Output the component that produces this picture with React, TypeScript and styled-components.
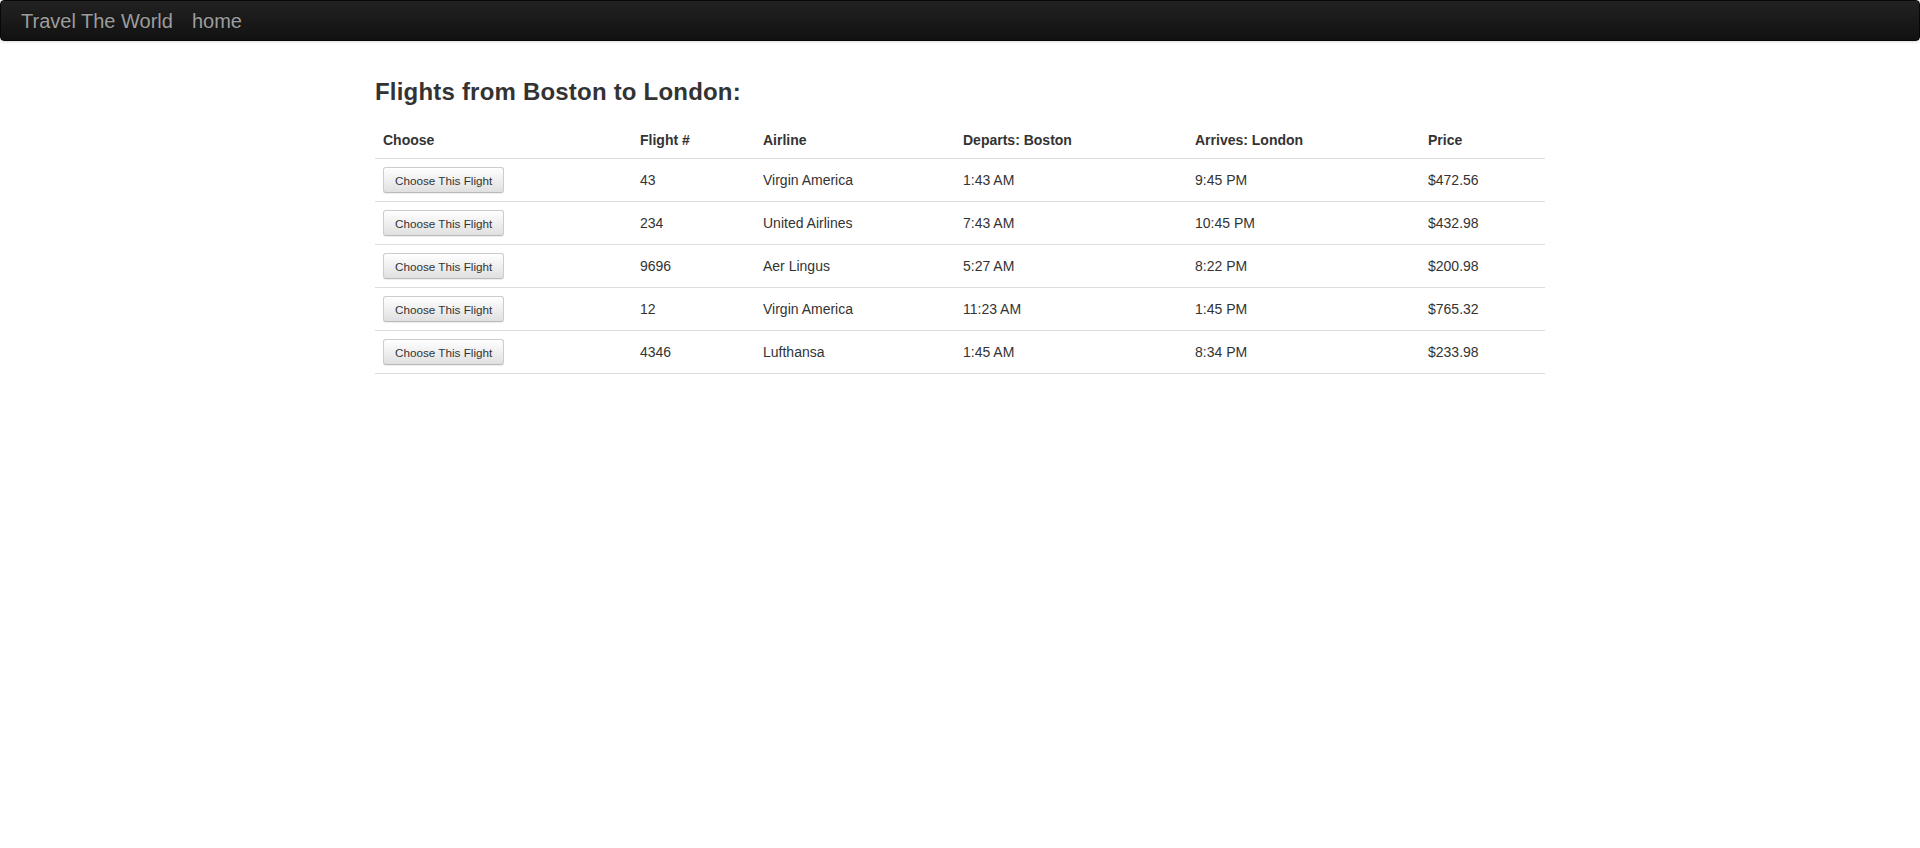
import styled, { createGlobalStyle } from "styled-components";

interface Flight {
  number: string;
  airline: string;
  departs: string;
  arrives: string;
  price: string;
}

const flights: Flight[] = [
  { number: "43", airline: "Virgin America", departs: "1:43 AM", arrives: "9:45 PM", price: "$472.56" },
  { number: "234", airline: "United Airlines", departs: "7:43 AM", arrives: "10:45 PM", price: "$432.98" },
  { number: "9696", airline: "Aer Lingus", departs: "5:27 AM", arrives: "8:22 PM", price: "$200.98" },
  { number: "12", airline: "Virgin America", departs: "11:23 AM", arrives: "1:45 PM", price: "$765.32" },
  { number: "4346", airline: "Lufthansa", departs: "1:45 AM", arrives: "8:34 PM", price: "$233.98" },
];

const columns = [
  { label: "Choose", width: 257 },
  { label: "Flight #", width: 123 },
  { label: "Airline", width: 200 },
  { label: "Departs: Boston", width: 232 },
  { label: "Arrives: London", width: 233 },
  { label: "Price", width: 125 },
];

export default function App() {
  return (
    <>
      <GlobalStyle />
      <Navbar>
        <Brand href="#">Travel The World</Brand>
        <NavLink href="#">home</NavLink>
      </Navbar>
      <Container>
        <Heading>Flights from Boston to London:</Heading>
        <FlightTable>
          <colgroup>
            {columns.map((c) => (
              <col key={c.label} style={{ width: c.width }} />
            ))}
          </colgroup>
          <thead>
            <tr>
              {columns.map((c) => (
                <HeadCell key={c.label}>{c.label}</HeadCell>
              ))}
            </tr>
          </thead>
          <tbody>
            {flights.map((f) => (
              <tr key={f.number}>
                <Cell>
                  <ChooseButton type="button">Choose This Flight</ChooseButton>
                </Cell>
                <Cell>{f.number}</Cell>
                <Cell>{f.airline}</Cell>
                <Cell>{f.departs}</Cell>
                <Cell>{f.arrives}</Cell>
                <Cell>{f.price}</Cell>
              </tr>
            ))}
          </tbody>
        </FlightTable>
      </Container>
    </>
  );
}

const GlobalStyle = createGlobalStyle`
  html, body {
    margin: 0;
    padding: 0;
    background: #fff;
  }

  body {
    font-family: "Liberation Sans", Helvetica, Arial, sans-serif;
    font-size: 14px;
    line-height: 20px;
    color: #333;
  }
`;

const Navbar = styled.nav`
  display: flex;
  align-items: center;
  gap: 19px;
  height: 41px;
  padding: 0 20px;
  box-sizing: border-box;
  background: linear-gradient(to bottom, #222 0%, #111 100%);
  border: 1px solid #080808;
  border-radius: 4px;
  box-shadow: 0 1px 3px rgba(0, 0, 0, 0.15);
`;

const Brand = styled.a`
  color: #9d9d9d;
  font-size: 20px;
  line-height: 24px;
  text-decoration: none;
  text-shadow: 0 -1px 0 rgba(0, 0, 0, 0.25);
`;

const NavLink = styled(Brand)``;

const Container = styled.main`
  width: 1170px;
  margin: 0 auto;
`;

const Heading = styled.h3`
  margin: 38px 0 17px;
  font-size: 24px;
  line-height: 26px;
  font-weight: bold;
  letter-spacing: 0.2px;
  color: #333;
`;

const FlightTable = styled.table`
  width: 100%;
  table-layout: fixed;
  border-collapse: collapse;
  border-spacing: 0;
  border-bottom: 1px solid #ddd;
`;

const HeadCell = styled.th`
  padding: 8px;
  text-align: left;
  vertical-align: bottom;
  font-size: 14px;
  line-height: 20px;
  font-weight: bold;
  color: #333;
`;

const Cell = styled.td`
  padding: 8px;
  border-top: 1px solid #ddd;
  vertical-align: middle;
  font-size: 14px;
  line-height: 20px;
  color: #333;
`;

const ChooseButton = styled.button`
  display: block;
  height: 26px;
  padding: 0 11px;
  font-family: "Liberation Sans", Helvetica, Arial, sans-serif;
  font-size: 11.7px;
  color: #333;
  background: linear-gradient(to bottom, #fff 0%, #e0e0e0 100%);
  border: 1px solid #ccc;
  border-bottom-color: #bbb;
  border-radius: 3px;
  box-shadow: inset 0 1px 0 rgba(255, 255, 255, 0.15), 0 1px 1px rgba(0, 0, 0, 0.075);
  cursor: pointer;
`;
